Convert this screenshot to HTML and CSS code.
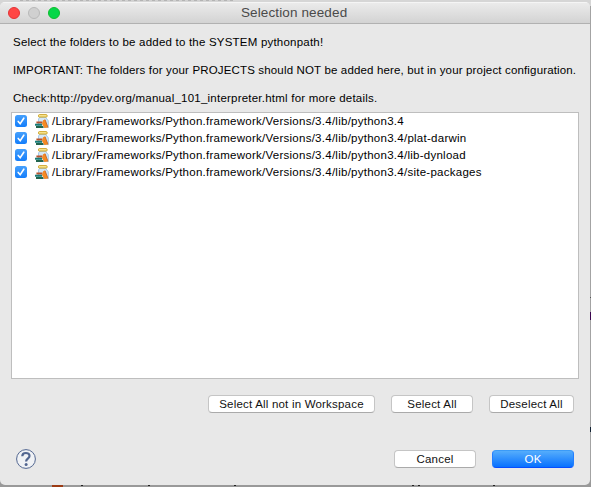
FILE: index.html
```html
<!DOCTYPE html>
<html lang="en">
<head>
<meta charset="utf-8">
<title>Selection needed</title>
<link rel="stylesheet" href="styles.css">
</head>
<body>
<div class="backdrop" aria-hidden="true">
  <span class="mark mark-top"></span><span class="mark mark-mid"></span><span class="mark mark-purple"></span><span class="mark mark-low"></span>
  <span class="mark mark-rust"></span><span class="mark mark-dot-a"></span><span class="mark mark-dot-b"></span><span class="mark mark-dot-c"></span><span class="mark mark-dot-d"></span><span class="mark mark-dot-e"></span>
</div>
<svg class="symbols" width="0" height="0" aria-hidden="true">
  <symbol id="jar" viewBox="0 0 14 15">
    <path d="M4.8 3.2h5.7l2.8 3.6v6.7H3.5V5z" fill="#d3e7f8" stroke="#94bfe4" stroke-width=".8"/>
    <rect x="3.5" y=".7" width="8.6" height="2.3" rx=".8" fill="#fff3a8" stroke="#c99b18"/>
    <path d="M1.4 7.4h6v2.2h-6z" fill="#b7532d"/>
    <path d="M0 9.7h7v2H0z" fill="#187c78"/>
    <path d="M1 12.1h7.4v2H1z" fill="#22644d"/>
    <path d="M8 6.2l2-.6 3 7.8-3.6.6-2.4-4z" fill="#f58a24"/>
    <path d="M10 5.6l3 7.8" stroke="#c65b16" stroke-width=".8"/>
  </symbol>
</svg>
<main class="window">
  <header class="titlebar">
    <div class="lights"><i class="light red"></i><i class="light gray"></i><i class="light green"></i></div>
    <h1><span class="title-text">Selection needed</span></h1>
  </header>
  <section class="message">
    <p><span class="m1">Select the folders to be added to the SYSTEM pythonpath!</span></p>
    <p><span class="m2">IMPORTANT: The folders for your PROJECTS should NOT be added here, but in your project configuration.</span></p>
    <p><span class="m3">Check:http://pydev.org/manual_101_interpreter.html for more details.</span></p>
  </section>
  <ul class="folders">
    <li><span class="check"><svg viewBox="0 0 12 12"><path d="M3.2 6.4l2 2.3L8.8 3.2"/></svg></span><svg class="jar"><use href="#jar"/></svg><span class="path">/Library/Frameworks/Python.framework/Versions/3.4/lib/python3.4</span></li>
    <li><span class="check"><svg viewBox="0 0 12 12"><path d="M3.2 6.4l2 2.3L8.8 3.2"/></svg></span><svg class="jar"><use href="#jar"/></svg><span class="path">/Library/Frameworks/Python.framework/Versions/3.4/lib/python3.4/plat-darwin</span></li>
    <li><span class="check"><svg viewBox="0 0 12 12"><path d="M3.2 6.4l2 2.3L8.8 3.2"/></svg></span><svg class="jar"><use href="#jar"/></svg><span class="path">/Library/Frameworks/Python.framework/Versions/3.4/lib/python3.4/lib-dynload</span></li>
    <li><span class="check"><svg viewBox="0 0 12 12"><path d="M3.2 6.4l2 2.3L8.8 3.2"/></svg></span><svg class="jar"><use href="#jar"/></svg><span class="path">/Library/Frameworks/Python.framework/Versions/3.4/lib/python3.4/site-packages</span></li>
  </ul>
  <div class="actions">
    <button class="btn wide">Select All not in Workspace</button>
    <button class="btn select">Select All</button>
    <button class="btn deselect">Deselect All</button>
  </div>
  <footer>
    <svg class="help" viewBox="0 0 20 20" role="img" aria-label="Help"><circle cx="10" cy="10" r="9.4"/><path d="M6.3 7.2C6.3 2.9 13.5 3 13.5 7c0 2.6-3.4 2.7-3.4 5.4"/><circle class="dot" cx="10.1" cy="15.4" r="1.5"/></svg>
    <button class="btn cancel">Cancel</button>
    <button class="btn ok">OK</button>
  </footer>
</main>
</body>
</html>
```

FILE: styles.css
```css
* { box-sizing: border-box; }
body {
  margin: 0;
  width: 591px;
  height: 487px;
  overflow: hidden;
  position: relative;
  padding-top: 2px;
  background: #9b9b9b;
  font: 11.5px/14px "Liberation Sans", Arial, sans-serif;
  color: #000;
}
.symbols { position: absolute; }
.backdrop {
  position: absolute;
  inset: 0;
  background: linear-gradient(#d6d6d6 0 6px, #a3a3a3 6px 480px, #999 480px);
}
.mark { position: absolute; background: #555; }
.mark-top { left: 20px; top: 0; width: 213px; height: 1px; background: repeating-linear-gradient(90deg, #b4b4b4 0 3px, #d0d0d0 3px 6px); }
.mark-mid { right: 0; top: 297px; width: 1px; height: 1px; }
.mark-purple { right: 0; top: 312px; width: 1px; height: 8px; background: #3b064f; }
.mark-low { right: 0; top: 427px; width: 1px; height: 5px; background: #123; }
.mark-rust { left: 52px; top: 485px; width: 11px; height: 2px; background: #9c3b14; }
.mark-dot-a, .mark-dot-b, .mark-dot-c, .mark-dot-d, .mark-dot-e { top: 485px; width: 2px; height: 1px; background: #222; }
.mark-dot-a { left: 81px; }
.mark-dot-b { left: 148px; }
.mark-dot-c { left: 234px; }
.mark-dot-d { left: 412px; width: 8px; background: linear-gradient(90deg, #222 2px, transparent 2px 6px, #222 6px); }
.mark-dot-e { left: 493px; }
.window {
  position: relative;
  width: 590px;
  height: 483px;
  background: #e8e8e8;
  border-radius: 5px;
  overflow: hidden;
}
.titlebar {
  height: 22px;
  display: grid;
  grid-template-columns: 68px 1fr 70px;
  align-items: center;
  background: linear-gradient(#ebebeb, #d3d3d3);
  border-top: 1px solid #f5f5f5;
  border-bottom: 1px solid #b1b1b1;
}
.lights { display: flex; gap: 8px; padding-left: 8px; }
.light { width: 12px; height: 12px; border-radius: 50%; border: 1px solid; }
.red { background: #ff4644; border-color: #e33336; }
.gray { background: #d0d0d0; border-color: #b8b8b8; }
.green { background: #05d748; border-color: #0dbd2d; }
h1 {
  margin: 0;
  padding-left: 173px;
  font-size: 13.5px;
  line-height: 20px;
  font-weight: 400;
  color: #4a4a4a;
  white-space: nowrap;
}
.title-text { letter-spacing: .12px; }
.message { padding: 11px 0 0 13px; height: 88px; }
.message p { margin: 0 0 14px; height: 14px; white-space: nowrap; }
.m1 { letter-spacing: .21px; }
.m2 { letter-spacing: .155px; }
.m3 { letter-spacing: .22px; }
.path { letter-spacing: .26px; }
.folders {
  list-style: none;
  margin: 0 0 0 11px;
  padding: 0;
  width: 568px;
  height: 267px;
  background: #fff;
  border: 1px solid #bebebe;
}
.folders li { display: flex; align-items: center; height: 17px; white-space: nowrap; }
.folders li:first-child { margin-top: -1px; }
.check { width: 12px; height: 12px; margin-left: 3px; border-radius: 2.5px; background: linear-gradient(#46a0fc, #147efb); display: flex; }
.check svg { width: 12px; height: 12px; }
.check path { fill: none; stroke: #fff; stroke-width: 1.6; stroke-linecap: round; }
.jar { width: 14px; height: 15px; margin: 2px 3px 0 8px; }
.actions { display: flex; padding: 16px 0 0 208px; height: 70px; align-items: flex-start; }
.btn {
  height: 18px;
  padding: 0;
  border: 1px solid #c5c5c5;
  border-bottom-color: #aaa;
  border-radius: 4px;
  background: #fff;
  font: inherit;
  line-height: 16px;
  letter-spacing: .2px;
  color: #111;
  white-space: nowrap;
}
.wide { width: 167px; }
.select { width: 82px; margin-left: 16px; }
.deselect { width: 85px; margin-left: 16px; }
footer { display: flex; padding-left: 16px; }
footer .btn { margin-top: 1px; }
.help { width: 20px; height: 20px; margin-right: 358px; }
.help circle { fill: #f0f2f5; stroke: #526690; stroke-width: 1; }
.help path { fill: none; stroke: #526690; stroke-width: 2.2; }
.help .dot { fill: #526690; stroke: none; }
.cancel { width: 82px; }
.ok { width: 82px; margin-left: 16px; color: #fff; background: linear-gradient(#55adfc, #0871ff); border-color: #3b9bf8 #237fff #074dff; }
```
